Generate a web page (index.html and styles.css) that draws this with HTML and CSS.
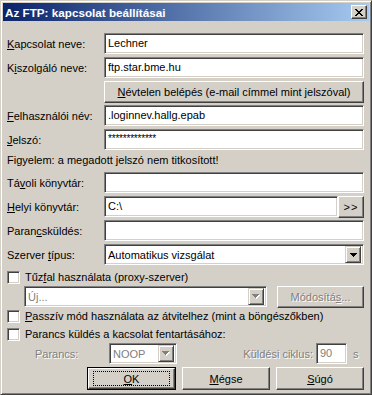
FILE: index.html
```html
<!DOCTYPE html>
<html lang="hu">
<head>
    <meta charset="UTF-8">
    <title>Az FTP: kapcsolat beállításai</title>
    <link rel="stylesheet" href="styles.css">
</head>
<body>
    <div class="window">
        <div class="titlebar">
            <span class="title">Az FTP: kapcsolat beállításai</span>
            <span class="close-btn">
                <svg width="8" height="7" viewBox="0 0 8 7"><path d="M0 0h2v1H0z M6 0h2v1H6z M1 1h2v1H1z M5 1h2v1H5z M2 2h4v1H2z M3 3h2v1H3z M2 4h4v1H2z M1 5h2v1H1z M5 5h2v1H5z M0 6h2v1H0z M6 6h2v1H6z" fill="#000"/></svg>
            </span>
        </div>

        <div class="content">
            <div class="row">
                <span class="label"><u>K</u>apcsolat neve:</span>
                <div class="field">Lechner</div>
            </div>
            <div class="row">
                <span class="label">K<u>i</u>szolgáló neve:</span>
                <div class="field">ftp.star.bme.hu</div>
            </div>
            <div class="row btn-row">
                <span class="label"></span>
                <div class="button wide"><span><u>N</u>évtelen belépés (e-mail címmel mint jelszóval)</span></div>
            </div>
            <div class="row">
                <span class="label"><u>F</u>elhasználói név:</span>
                <div class="field">.loginnev.hallg.epab</div>
            </div>
            <div class="row">
                <span class="label"><u>J</u>elszó:</span>
                <div class="field password">*************</div>
            </div>
            <div class="note">Figyelem: a megadott jelszó nem titkosított!</div>
            <div class="row">
                <span class="label">Tá<u>v</u>oli könyvtár:</span>
                <div class="field"></div>
            </div>
            <div class="row">
                <span class="label"><u>H</u>elyi könyvtár:</span>
                <div class="field">C:\</div>
                <div class="button browse">&gt;&gt;</div>
            </div>
            <div class="row">
                <span class="label">Paran<u>c</u>sküldés:</span>
                <div class="field"></div>
            </div>
            <div class="row">
                <span class="label">Szerver <u>t</u>ípus:</span>
                <div class="combo">
                    <span class="combo-text">Automatikus vizsgálat</span>
                    <span class="drop-btn">
                        <svg width="7" height="4" viewBox="0 0 7 4"><path d="M0 0h7v1H0z M1 1h5v1H1z M2 2h3v1H2z M3 3h1v1H3z" fill="#000"/></svg>
                    </span>
                </div>
            </div>

            <div class="check-row">
                <span class="checkbox"></span>
                <span>Tűz<u>f</u>al használata (proxy-szerver)</span>
            </div>
            <div class="proxy-row">
                <div class="combo proxy-combo disabled">
                    <span class="combo-text">Új...</span>
                    <span class="drop-btn">
                        <svg width="8" height="5" viewBox="0 0 8 5"><path d="M1 1h7v1H1z M2 2h5v1H2z M3 3h3v1H3z M4 4h1v1H4z" fill="#fff"/><path d="M0 0h7v1H0z M1 1h5v1H1z M2 2h3v1H2z M3 3h1v1H3z" fill="#808080"/></svg>
                    </span>
                </div>
                <div class="button modify disabled"><span>Módosítá<u>s</u>...</span></div>
            </div>
            <div class="check-row">
                <span class="checkbox"></span>
                <span><u>P</u>asszív mód használata az átvitelhez (mint a böngészőkben)</span>
            </div>
            <div class="check-row">
                <span class="checkbox"></span>
                <span>Parancs küldés a kacsolat fentartásához:</span>
            </div>
            <div class="keepalive-row">
                <span class="cmd-label disabled-text">Parancs:</span>
                <div class="combo noop-combo disabled">
                    <span class="combo-text">NOOP</span>
                    <span class="drop-btn">
                        <svg width="8" height="5" viewBox="0 0 8 5"><path d="M1 1h7v1H1z M2 2h5v1H2z M3 3h3v1H3z M4 4h1v1H4z" fill="#fff"/><path d="M0 0h7v1H0z M1 1h5v1H1z M2 2h3v1H2z M3 3h1v1H3z" fill="#808080"/></svg>
                    </span>
                </div>
                <span class="cycle-label disabled-text">Küldési ciklus:</span>
                <div class="field cycle-field disabled">90</div>
                <span class="unit disabled-text">s</span>
            </div>

            <div class="actions">
                <div class="default-frame">
                    <div class="button action"><span class="focus"><u>O</u>K</span></div>
                </div>
                <div class="button action"><span><u>M</u>égse</span></div>
                <div class="button action"><span><u>S</u>úgó</span></div>
            </div>
        </div>
    </div>
</body>
</html>
```

FILE: styles.css
```css
body {
    margin: 0;
    font-family: "Liberation Sans", Arial, sans-serif;
    font-size: 11px;
    color: #000;
}
.window {
    width: 372px;
    height: 395px;
    box-sizing: border-box;
    background-color: #d4d0c8;
    border: 1px solid;
    border-color: #d4d0c8 #404040 #404040 #d4d0c8;
    box-shadow: inset 1px 1px #fff, inset -1px -1px #808080;
    padding: 2px;
}
.titlebar {
    height: 18px;
    display: flex;
    align-items: center;
    justify-content: space-between;
    padding-left: 2px;
    background: linear-gradient(to right, #0a246a, #a6caf0);
    color: #fff;
    font-weight: bold;
    font-size: 11.7px;
}
.close-btn {
    width: 16px;
    height: 14px;
    margin-right: 2px;
    box-sizing: border-box;
    background-color: #d4d0c8;
    border: 1px solid;
    border-color: #fff #404040 #404040 #fff;
    box-shadow: inset -1px -1px #808080;
    display: flex;
    align-items: center;
    justify-content: center;
}
.content {
    padding: 12px 5px 0 4px;
}
.row {
    display: flex;
    align-items: center;
    height: 21px;
    margin-bottom: 3px;
}
.btn-row {
    height: 22px;
    margin-bottom: 2px;
}
.label {
    width: 97px;
    flex-shrink: 0;
    white-space: nowrap;
}
.field {
    flex: 1;
    height: 21px;
    box-sizing: border-box;
    background-color: #fff;
    border: 1px solid;
    border-color: #808080 #fff #fff #808080;
    box-shadow: inset 1px 1px #404040, inset -1px -1px #d4d0c8;
    padding: 0 3px;
    line-height: 19px;
    white-space: nowrap;
}
.password {
    font-size: 10px;
    line-height: 17px;
    letter-spacing: -0.2px;
}
.note {
    line-height: 15px;
    margin-bottom: 4px;
}
.button {
    box-sizing: border-box;
    background-color: #d4d0c8;
    border: 1px solid;
    border-color: #fff #404040 #404040 #fff;
    box-shadow: inset -1px -1px #808080;
    display: flex;
    align-items: center;
    justify-content: center;
    white-space: nowrap;
}
.wide {
    flex: 1;
    height: 22px;
}
.browse {
    width: 26px;
    height: 22px;
    align-self: flex-start;
    letter-spacing: 1px;
}
.combo {
    flex: 1;
    height: 21px;
    box-sizing: border-box;
    display: flex;
    align-items: center;
    background-color: #fff;
    border: 1px solid;
    border-color: #808080 #fff #fff #808080;
    box-shadow: inset 1px 1px #404040, inset -1px -1px #d4d0c8;
    padding: 1px 2px 1px 3px;
}
.combo-text {
    flex: 1;
    white-space: nowrap;
}
.drop-btn {
    width: 16px;
    height: 17px;
    box-sizing: border-box;
    background-color: #d4d0c8;
    border: 1px solid;
    border-color: #d4d0c8 #404040 #404040 #d4d0c8;
    box-shadow: inset 1px 1px #fff, inset -1px -1px #808080;
    display: flex;
    align-items: center;
    justify-content: center;
}
.check-row {
    display: flex;
    align-items: center;
    height: 18px;
}
.checkbox {
    width: 13px;
    height: 13px;
    box-sizing: border-box;
    background-color: #fff;
    border: 1px solid;
    border-color: #808080 #fff #fff #808080;
    box-shadow: inset 1px 1px #404040, inset -1px -1px #d4d0c8;
    margin-right: 5px;
    flex-shrink: 0;
}
.proxy-row {
    display: flex;
    align-items: center;
    height: 21px;
}
.proxy-combo {
    flex: none;
    width: 243px;
    margin-left: 17px;
}
.modify {
    width: 87px;
    height: 22px;
    margin-left: 10px;
}
.disabled,
.disabled-text {
    color: #808080;
}
.disabled .combo-text,
.button.disabled span,
.disabled-text,
.field.disabled {
    color: #808080;
    text-shadow: 1px 1px #fff;
}
.keepalive-row {
    display: flex;
    align-items: center;
    height: 21px;
}
.cmd-label {
    width: 74px;
    margin-left: 28px;
}
.noop-combo {
    flex: none;
    width: 68px;
}
.cycle-label {
    margin-left: auto;
    margin-right: 3px;
}
.cycle-field {
    flex: none;
    width: 31px;
}
.unit {
    width: 11px;
    padding-left: 6px;
}
.actions {
    display: flex;
    justify-content: flex-end;
    gap: 6px;
    margin-top: 3px;
}
.default-frame {
    width: 89px;
    height: 23px;
    box-sizing: border-box;
    border: 1px solid #000;
}
.default-frame .button {
    width: 100%;
    height: 100%;
}
.action {
    width: 88px;
    height: 23px;
}
.focus {
    display: flex;
    align-items: center;
    justify-content: center;
    width: 75px;
    height: 13px;
    border: 1px dotted #000;
}
```
